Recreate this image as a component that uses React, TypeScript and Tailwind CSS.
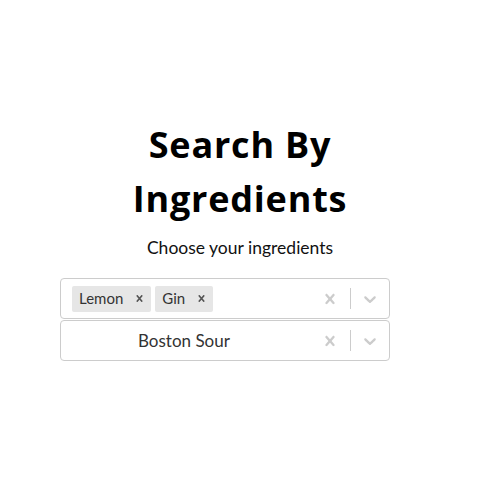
const CROSS =
  "M14.348 14.849c-0.469 0.469-1.229 0.469-1.697 0l-2.651-3.030-2.651 3.029c-0.469 0.469-1.229 0.469-1.697 0-0.469-0.469-0.469-1.229 0-1.697l2.758-3.15-2.759-3.152c-0.469-0.469-0.469-1.228 0-1.697s1.228-0.469 1.697 0l2.652 3.031 2.651-3.031c0.469-0.469 1.228-0.469 1.697 0s0.469 1.229 0 1.697l-2.758 3.152 2.758 3.15c0.469 0.469 0.469 1.229 0 1.698z";
const CHEVRON =
  "M4.516 7.548c0.436-0.446 1.043-0.481 1.576 0l3.908 3.747 3.908-3.747c0.533-0.481 1.141-0.446 1.574 0 0.436 0.445 0.408 1.197 0 1.615-0.406 0.418-4.695 4.502-4.695 4.502-0.217 0.223-0.502 0.335-0.787 0.335s-0.57-0.112-0.789-0.335c0 0-4.287-4.084-4.695-4.502s-0.436-1.17 0-1.615z";

function Icon({ d, size }: { d: string; size: number }) {
  return (
    <svg width={size} height={size} viewBox="0 0 20 20" fill="currentColor" aria-hidden="true">
      <path d={d} />
    </svg>
  );
}

function Indicators() {
  return (
    <div className="flex items-center self-stretch text-[#cccccc]">
      <div className="flex items-center pl-[8px] pr-[10px]">
        <Icon d={CROSS} size={20} />
      </div>
      <span className="w-px self-stretch my-[9px] bg-[#cccccc]" />
      <div className="flex items-center px-[9px]">
        <Icon d={CHEVRON} size={20} />
      </div>
    </div>
  );
}

function Tag({ label }: { label: string }) {
  return (
    <div className="flex items-center h-[26px] mx-[2px] rounded-[2px] bg-[#e6e6e6] text-[#333333]">
      <span className="pl-[7px] pr-[4px] text-[15px] leading-none">{label}</span>
      <span className="flex items-center justify-center w-[24px] text-[#555555]">
        <Icon d={CROSS} size={13} />
      </span>
    </div>
  );
}

export default function App() {
  return (
    <div className="min-h-[482px] w-full bg-white flex flex-col pt-[118px] font-['Lato',sans-serif] text-black">
      <div className="flex flex-col items-center pr-[3px]">
        <h1 className="text-center text-[36px] leading-[54px] font-bold tracking-[0.8px] font-['Open_Sans',sans-serif]">
          Search By
          <br />
          Ingredients
        </h1>
        <p className="mt-[12px] text-[17.5px] leading-[20px] text-[#111111]">Choose your ingredients</p>
      </div>

      <div className="mt-[20px] ml-[60px] w-[330px] flex flex-col gap-[1px]">
        {/* multi select */}
        <div className="flex items-center h-[41px] border border-[#cccccc] rounded-[4px] bg-white">
          <div className="flex flex-1 items-center pl-[9px]">
            <Tag label="Lemon" />
            <Tag label="Gin" />
          </div>
          <Indicators />
        </div>

        {/* single select */}
        <div className="flex items-center h-[41px] border border-[#cccccc] rounded-[4px] bg-white">
          <div className="flex-1 pl-[77px] text-[17px] text-[#333333]">Boston Sour</div>
          <Indicators />
        </div>
      </div>
    </div>
  );
}
